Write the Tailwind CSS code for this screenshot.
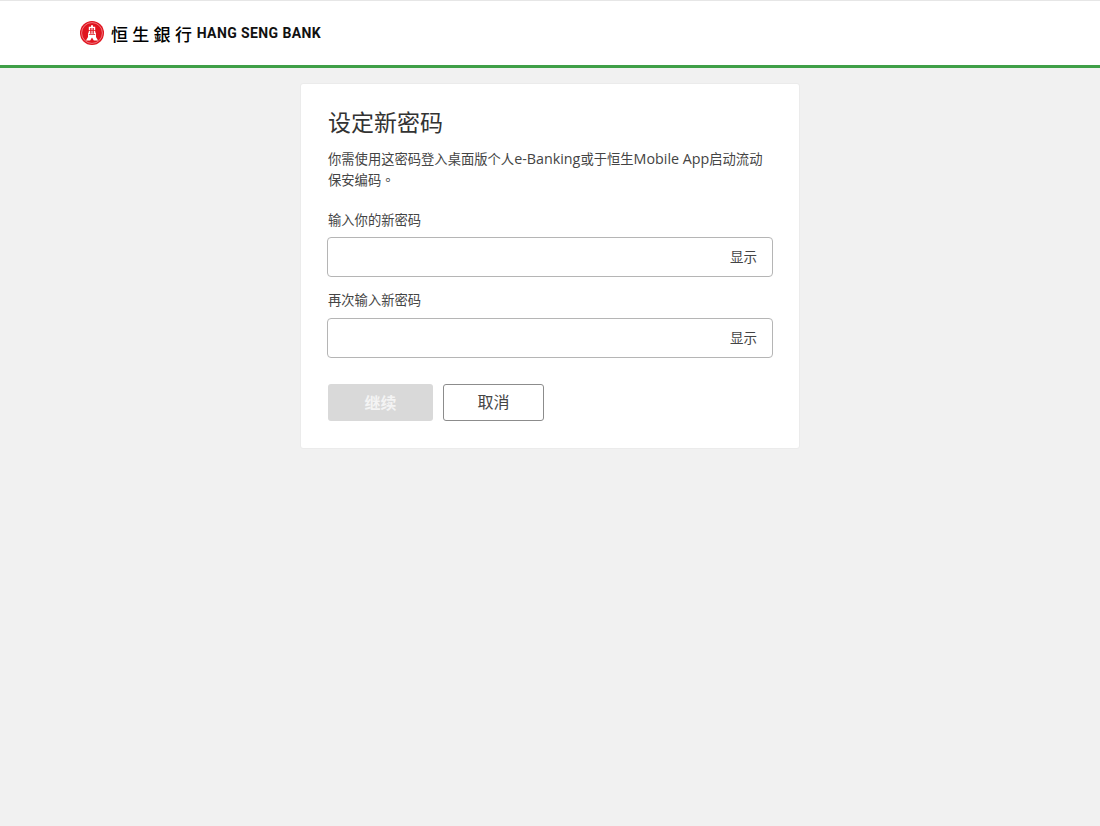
<!DOCTYPE html>
<html lang="zh-CN">
<head>
  <meta charset="UTF-8" />
  <title>设定新密码</title>
  <script src="https://cdn.jsdelivr.net/npm/@tailwindcss/browser@4"></script>
</head>
<body class="bg-[#f1f1f1] text-[#333] min-h-[826px] font-['Open_Sans','Noto_Sans_CJK_SC',sans-serif]">

  <header class="h-[68px] bg-white border-t border-[#e6e6e6] border-b-[3px] border-b-[#3f9f47] pl-[80px] flex items-center">
    <svg class="w-[24px] h-[24px] shrink-0" viewBox="0 0 24 24">
      <circle cx="12" cy="12" r="12" fill="#e0141f" />
      <circle cx="12" cy="12" r="10.4" fill="none" stroke="#f7b9bc" stroke-width="0.6" />
      <path d="M11 4.200h2v1.500h2.200v5.300l.8 1.500v3.500l2 3.500h-4.200l-1.800-3-1.800 3H6l2-3.500v-3.500l.8-1.500V5.700H11z" fill="#fff" />
      <path d="M7.800 9.300h8.400v.8H7.800zM10.200 7h.9v5.800h-.9zM11.600 7h.8v5.800h-.8zM12.900 7h.9v5.800h-.9zM8.800 13h6.400v.7H8.800z" fill="#e0141f" />
    </svg>
    <span lang="zh-TW" class="ml-[7px] text-[17px] leading-none font-medium tracking-[4.300px] text-black font-['Noto_Sans_CJK_TC',sans-serif]">恒生銀行</span>
    <span class="ml-[0.500px] text-[14px] leading-none font-bold text-[#111] font-['Roboto',sans-serif] tracking-[0.400px]">HANG SENG BANK</span>
  </header>

  <main class="flex justify-center pt-[15px]">
    <form class="w-[500px] h-[366px] bg-white rounded-[3px] border border-[#ebebeb] px-[26px] pt-[23px]">
      <h1 class="pl-[1px] text-[23px] leading-[30px] font-normal text-[#333]">设定新密码</h1>
      <p class="mt-[12px] pl-[1px] text-[13.300px] leading-[20.500px] text-[#444]">你需使用这密码登入桌面版个人<span class="text-[14.300px]">e-Banking</span>或于恒生<span class="text-[14.300px]">Mobile App</span>启动流动<br />保安编码<span lang="zh-TW" class="font-['Noto_Sans_CJK_TC',sans-serif]">。</span></p>

      <label class="block mt-[20px] pl-[1px] text-[13.300px] leading-[20px] text-[#444]">输入你的新密码</label>
      <div class="mt-[7px] h-[40px] w-[446px] border border-[#b5b5b5] rounded-[4px] flex items-center justify-end pr-[15px]">
        <span class="text-[13.500px] leading-[20px] text-[#444]">显示</span>
      </div>

      <label class="block mt-[13px] pl-[1px] text-[13.300px] leading-[20px] text-[#444]">再次输入新密码</label>
      <div class="mt-[8px] h-[40px] w-[446px] border border-[#b5b5b5] rounded-[4px] flex items-center justify-end pr-[15px]">
        <span class="text-[13.500px] leading-[20px] text-[#444]">显示</span>
      </div>

      <div class="mt-[26px] flex gap-[10px]">
        <button type="button" class="ml-[1px] w-[105px] h-[37px] bg-[#d9d9d9] rounded-[3px] text-[#f4f4f4] text-[16px] font-bold">继续</button>
        <button type="button" class="w-[101px] h-[37px] bg-white border border-[#8c8c8c] rounded-[3px] text-[#444] text-[16px] pb-[1px]">取消</button>
      </div>
    </form>
  </main>

</body>
</html>
